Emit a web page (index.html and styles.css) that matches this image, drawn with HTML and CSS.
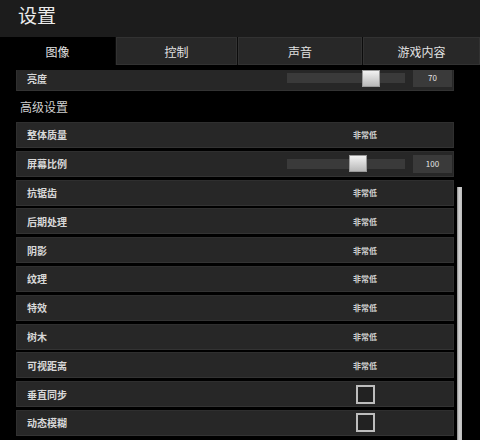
FILE: index.html
```html
<!DOCTYPE html>
<html lang="zh-CN">
<head>
  <meta charset="UTF-8">
  <meta name="viewport" content="width=device-width, initial-scale=1.0">
  <title>设置</title>
  <link rel="stylesheet" href="styles.css">
</head>
<body>
  <!-- 标题栏 -->
  <header class="header">设置</header>

  <!-- 选项卡 -->
  <nav class="tabs">
    <div class="tab active">图像</div>
    <div class="tab">控制</div>
    <div class="tab">声音</div>
    <div class="tab">游戏内容</div>
  </nav>

  <div class="panel">
    <div class="clip">
      <div class="list">
        <div class="row">
          <span class="label">亮度</span>
          <div class="control slider-ctl">
            <div class="track"><div class="thumb" style="margin-left:75px"></div></div>
            <div class="num">70</div>
          </div>
        </div>

        <div class="section">高级设置</div>

        <div class="row">
          <span class="label">整体质量</span>
          <div class="control"><span class="value">非常低</span></div>
        </div>
        <div class="row">
          <span class="label">屏幕比例</span>
          <div class="control slider-ctl">
            <div class="track"><div class="thumb" style="margin-left:62px"></div></div>
            <div class="num">100</div>
          </div>
        </div>
        <div class="row">
          <span class="label">抗锯齿</span>
          <div class="control"><span class="value">非常低</span></div>
        </div>
        <div class="row">
          <span class="label">后期处理</span>
          <div class="control"><span class="value">非常低</span></div>
        </div>
        <div class="row">
          <span class="label">阴影</span>
          <div class="control"><span class="value">非常低</span></div>
        </div>
        <div class="row">
          <span class="label">纹理</span>
          <div class="control"><span class="value">非常低</span></div>
        </div>
        <div class="row">
          <span class="label">特效</span>
          <div class="control"><span class="value">非常低</span></div>
        </div>
        <div class="row">
          <span class="label">树木</span>
          <div class="control"><span class="value">非常低</span></div>
        </div>
        <div class="row">
          <span class="label">可视距离</span>
          <div class="control"><span class="value">非常低</span></div>
        </div>
        <div class="row">
          <span class="label">垂直同步</span>
          <div class="control"><span class="checkbox"></span></div>
        </div>
        <div class="row">
          <span class="label">动态模糊</span>
          <div class="control"><span class="checkbox"></span></div>
        </div>
      </div>
    </div>

    <!-- 滚动条 -->
    <div class="scrollbar"><div class="scroll-thumb"></div></div>
  </div>
</body>
</html>
```

FILE: styles.css
```css
/* 基础 */
* {
  margin: 0;
  padding: 0;
  box-sizing: border-box;
}
html, body {
  height: 100%;
  background: #000;
  color: #ddd;
  font-family: "Noto Sans CJK SC", "Noto Sans", sans-serif;
  overflow: hidden;
}

/* 标题栏 */
.header {
  height: 37px;
  background: #1c1c1c;
  padding-left: 18px;
  font-size: 19px;
  line-height: 30px;
  color: #ececec;
}

/* 选项卡 */
.tabs {
  display: grid;
  grid-template-columns: 115px 121px 124px 1fr;
  column-gap: 1px;
  height: 28px;
  background: #0c0c0c;
}
.tab {
  display: flex;
  justify-content: center;
  align-items: center;
  background: #282828;
  border: 1px solid #323232;
  font-size: 12px;
  color: #e2e2e2;
}
.tab.active {
  background: #000;
  border-color: #000;
}

/* 内容区 */
.panel {
  display: flex;
  height: 375px;
  padding-top: 5px;
}
.clip {
  width: 454px;
  padding-left: 16px;
  overflow: hidden;
}
.list {
  display: flex;
  flex-direction: column;
  gap: 2.8px;
  margin-top: -5px;
}
.row {
  display: flex;
  align-items: center;
  justify-content: space-between;
  height: 26px;
  background: #272727;
  border: 1px solid #2f2f2f;
  border-bottom-color: #333;
}
.label {
  padding-left: 10px;
  font-size: 10px;
  font-weight: bold;
  color: #d8d8d8;
}
.section {
  height: 25.4px;
  padding-left: 4px;
  font-size: 12px;
  line-height: 26px;
  color: #cfcfcf;
}

/* 右侧控件 */
.control {
  width: 165px;
  margin-right: 1px;
  padding-right: 9px;
  display: flex;
  justify-content: center;
  align-items: center;
}
.value {
  font-size: 8px;
  font-weight: bold;
  color: #cfcfcf;
}
.slider-ctl {
  padding-right: 0;
  justify-content: space-between;
}
.track {
  width: 118px;
  height: 10px;
  background: #3a3a3a;
  display: flex;
  align-items: center;
}
.thumb {
  width: 18px;
  height: 17px;
  flex-shrink: 0;
  background: linear-gradient(#f2f2f2, #b8b8b8);
  border: 1px solid #9a9a9a;
}
.num {
  width: 39px;
  height: 18px;
  background: #3a3a3a;
  font-size: 8px;
  line-height: 18px;
  text-align: center;
  color: #e4e4e4;
}
.checkbox {
  width: 19px;
  height: 19px;
  border: 2px solid #bdbdbd;
  background: #222;
}

/* 滚动条 */
.scrollbar {
  width: 5px;
  margin-left: 3px;
  display: flex;
  flex-direction: column;
}
.scroll-thumb {
  margin-top: 117px;
  flex: 1;
  background: linear-gradient(90deg, #8a8a8a, #d2d2d2 40%, #bcbcbc);
}
```
